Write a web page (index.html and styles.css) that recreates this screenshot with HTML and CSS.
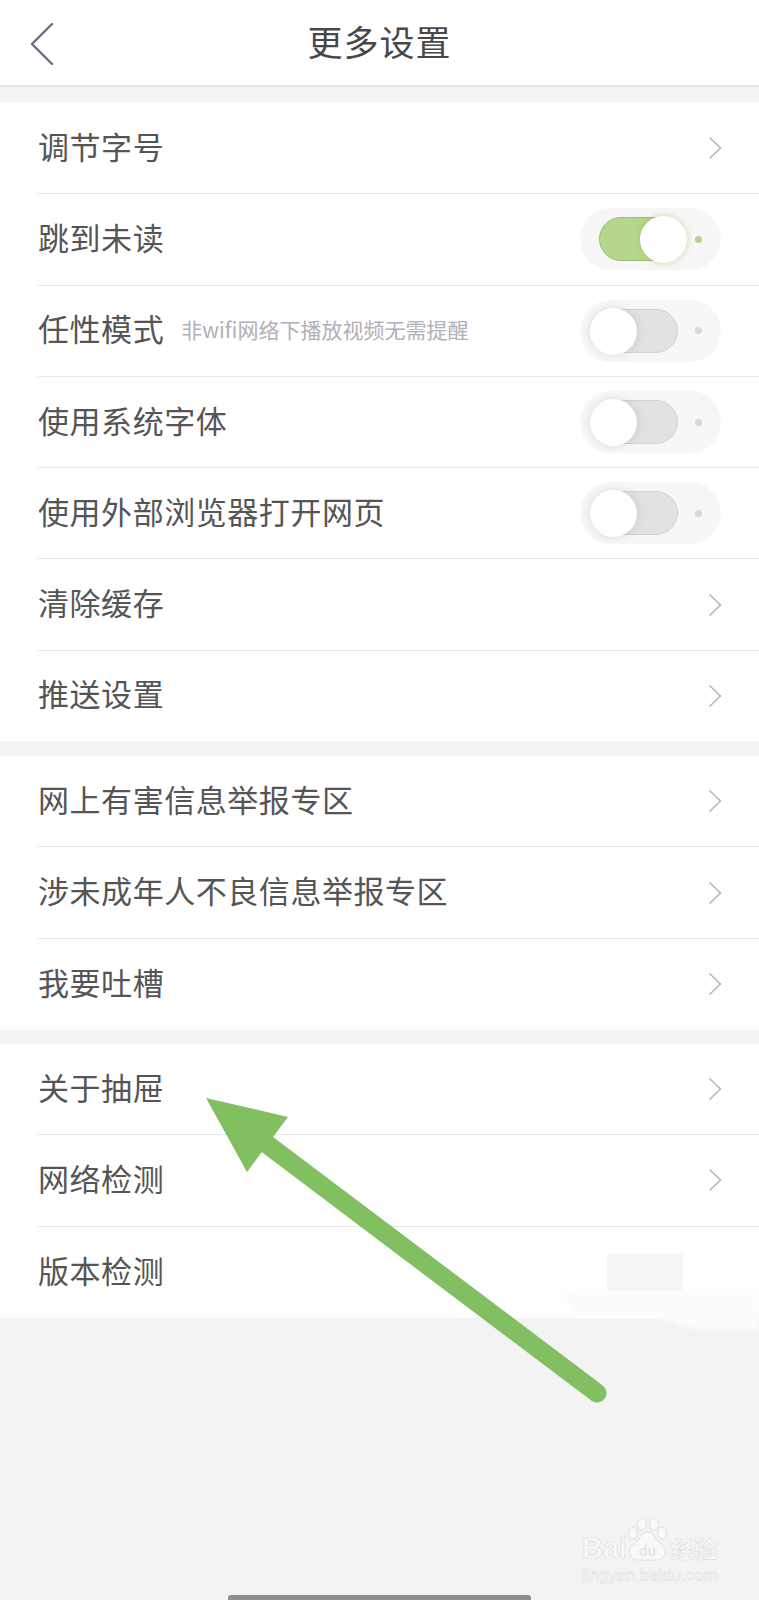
FILE: index.html
```html
<!DOCTYPE html>
<html lang="zh-CN">

<head>
    <meta charset="UTF-8">
    <meta name="viewport" content="width=device-width, initial-scale=1.0">
    <title>更多设置</title>
    <link rel="stylesheet" href="styles.css">
</head>

<body>
    <header class="topbar">
        <svg class="back" width="26" height="44" viewBox="0 0 26 44">
            <path d="M23 2 L3 22 L23 42" fill="none" stroke="#6f6c86" stroke-width="2.4" stroke-linecap="round" stroke-linejoin="round" />
        </svg>
        <h1 class="title">更多设置</h1>
    </header>

    <section class="group first">
        <div class="row"><span class="label">调节字号</span><svg class="chevron" viewBox="0 0 14 24"><path d="M1.5 1.5 L12.5 12 L1.5 22.5" /></svg></div>
        <div class="row"><span class="label">跳到未读</span>
            <div class="toggle on"><span class="track"></span><span class="knob"></span><span class="dot"></span></div>
        </div>
        <div class="row"><span class="label">任性模式</span><span class="hint">非wifi网络下播放视频无需提醒</span>
            <div class="toggle"><span class="track"></span><span class="knob"></span><span class="dot"></span></div>
        </div>
        <div class="row"><span class="label">使用系统字体</span>
            <div class="toggle"><span class="track"></span><span class="knob"></span><span class="dot"></span></div>
        </div>
        <div class="row"><span class="label">使用外部浏览器打开网页</span>
            <div class="toggle"><span class="track"></span><span class="knob"></span><span class="dot"></span></div>
        </div>
        <div class="row"><span class="label">清除缓存</span><svg class="chevron" viewBox="0 0 14 24"><path d="M1.5 1.5 L12.5 12 L1.5 22.5" /></svg></div>
        <div class="row"><span class="label">推送设置</span><svg class="chevron" viewBox="0 0 14 24"><path d="M1.5 1.5 L12.5 12 L1.5 22.5" /></svg></div>
    </section>

    <section class="group">
        <div class="row"><span class="label">网上有害信息举报专区</span><svg class="chevron" viewBox="0 0 14 24"><path d="M1.5 1.5 L12.5 12 L1.5 22.5" /></svg></div>
        <div class="row"><span class="label">涉未成年人不良信息举报专区</span><svg class="chevron" viewBox="0 0 14 24"><path d="M1.5 1.5 L12.5 12 L1.5 22.5" /></svg></div>
        <div class="row"><span class="label">我要吐槽</span><svg class="chevron" viewBox="0 0 14 24"><path d="M1.5 1.5 L12.5 12 L1.5 22.5" /></svg></div>
    </section>

    <section class="group">
        <div class="row"><span class="label">关于抽屉</span><svg class="chevron" viewBox="0 0 14 24"><path d="M1.5 1.5 L12.5 12 L1.5 22.5" /></svg></div>
        <div class="row"><span class="label">网络检测</span><svg class="chevron" viewBox="0 0 14 24"><path d="M1.5 1.5 L12.5 12 L1.5 22.5" /></svg></div>
        <div class="row"><span class="label">版本检测</span></div>
    </section>

    <div class="homebar"></div>

    <!-- blurred-out patch and annotation arrow sit on top of the screenshot -->
    <svg class="overlay" width="759" height="1600" viewBox="0 0 759 1600">
        <path class="smear" d="M560 1290 L759 1288 L759 1330 L690 1328 L653 1317 L575 1317 Z" fill="#fcfcfc" />
        <rect class="patch" x="607" y="1253" width="76" height="38" fill="#f6f6f6" />
        <path d="M597 1393 L268 1145" stroke="#82bf60" stroke-width="19" stroke-linecap="round" fill="none" />
        <path d="M206 1098 L288 1117 L247 1172 Z" fill="#82bf60" />
    </svg>

    <div class="watermark">
        <div class="wm-top">
            <span class="wm-bai">Bai</span>
            <svg class="wm-paw" width="41" height="43" viewBox="0 0 41 43">
                <g fill="#f9f9f9" stroke="#e0e0e0" stroke-width="1">
                    <ellipse cx="6" cy="15" rx="4.5" ry="6" />
                    <ellipse cx="15" cy="6.5" rx="4.5" ry="6" />
                    <ellipse cx="27" cy="6.5" rx="4.5" ry="6" />
                    <ellipse cx="35" cy="15" rx="4.5" ry="6" />
                    <path d="M20.5 14 C14 14 13 22 7 26 C0 31 2 42 11 42 C16 42 25 42 30 42 C39 42 41 31 34 26 C28 22 27 14 20.5 14 Z" />
                </g>
                <text class="wm-du" x="20.5" y="38" text-anchor="middle">du</text>
            </svg>
            <span class="wm-jy">经验</span>
        </div>
        <div class="wm-url">jingyan.baidu.com</div>
    </div>
</body>

</html>
```

FILE: styles.css
```css
* {
    box-sizing: border-box;
}

html,
body {
    margin: 0;
    padding: 0;
}

body {
    position: relative;
    display: flex;
    flex-direction: column;
    width: 759px;
    height: 1600px;
    overflow: hidden;
    background: #f3f3f3;
    font-family: "Noto Sans CJK SC", "Noto Sans", sans-serif;
    color: #555;
}

.topbar {
    position: relative;
    display: flex;
    align-items: center;
    justify-content: center;
    height: 87px;
    padding-bottom: 5px;
    background: #fff;
    border-bottom: 2px solid #e6e6e6;
}

.back {
    position: absolute;
    left: 29px;
    top: 22px;
}

.title {
    margin: 0;
    font-size: 35px;
    font-weight: 400;
    color: #484848;
    letter-spacing: 1px;
}

.group {
    margin-top: 14px;
    padding-left: 38px;
    background: #fff;
}

.group.first {
    margin-top: 15px;
    padding-top: 1px;
}

.group.first + .group {
    margin-top: 15px;
}

.group.first .row:last-child {
    height: 90.3px;
}

.row {
    display: flex;
    align-items: center;
    height: 91.3px;
    padding-right: 37px;
    border-bottom: 1px solid #e8e8e8;
}

.row:last-child {
    border-bottom: 0;
}

.label {
    margin-bottom: 6px;
    font-size: 31px;
    letter-spacing: 0.55px;
}

.hint {
    margin-left: 17px;
    margin-bottom: 4px;
    font-size: 21px;
    color: #b0b0b8;
}

.chevron {
    width: 14px;
    height: 24px;
    margin-left: auto;
    fill: none;
    stroke: #b8b8b8;
    stroke-width: 1.6;
}

.toggle {
    position: relative;
    display: flex;
    align-items: center;
    width: 141px;
    height: 62px;
    margin-left: auto;
    margin-right: 1px;
    padding: 0 19px;
    border-radius: 31px;
    background: #f7f7f7;
}

.track {
    width: 81px;
    height: 44px;
    border-radius: 22px;
    background: #e2e2e2;
    border: 1.5px solid #d2d2d2;
}

.dot {
    width: 7px;
    height: 7px;
    margin-left: 17px;
    border-radius: 50%;
    background: #d8d8d8;
}

.knob {
    position: absolute;
    left: 10px;
    top: 8px;
    width: 47px;
    height: 47px;
    border-radius: 50%;
    background: #fff;
    box-shadow: 0 0 10px rgba(0, 0, 0, 0.12);
}

.toggle.on .track {
    background: #b6d78b;
    border-color: #9dbd76;
}

.toggle.on .knob {
    left: 60px;
    box-shadow: 0 0 6px rgba(130, 180, 70, 0.45);
}

.toggle.on .dot {
    background: #b6d78b;
}

.homebar {
    width: 303px;
    height: 5px;
    margin: auto auto 0;
    border-radius: 3px 3px 0 0;
    background: #8e8e8e;
}

.overlay {
    position: absolute;
    left: 0;
    top: 0;
}

.smear {
    filter: blur(2px);
}

.patch {
    filter: blur(0.6px);
}

.watermark {
    position: absolute;
    left: 582px;
    top: 1518px;
    width: 135px;
    color: #f9f9f9;
}

.wm-top {
    position: relative;
    display: flex;
    align-items: flex-end;
    height: 43px;
}

.wm-bai {
    font-family: "Liberation Sans", sans-serif;
    font-size: 29px;
    line-height: 26px;
    font-weight: 700;
    -webkit-text-stroke: 0.7px #dedede;
}

.wm-paw {
    position: absolute;
    left: 45px;
    top: 0;
}

.wm-du {
    font-family: "Liberation Sans", sans-serif;
    font-size: 14px;
    font-weight: 700;
    fill: #e4e4e4;
}

.wm-jy {
    margin-left: auto;
    font-size: 23px;
    line-height: 26px;
    font-weight: 700;
    -webkit-text-stroke: 0.6px #dedede;
}

.wm-url {
    margin-top: 6px;
    font-family: "Liberation Sans", sans-serif;
    font-size: 16.8px;
    line-height: 18px;
    white-space: nowrap;
    -webkit-text-stroke: 0.5px #dedede;
}
```
